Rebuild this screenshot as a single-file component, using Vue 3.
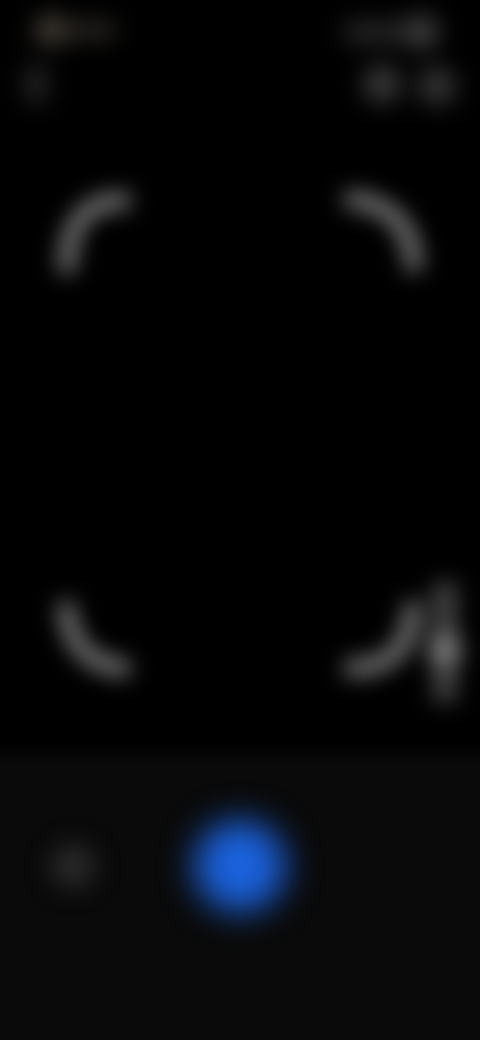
<script setup>
const corners = [
  { id: 'tl', d: 'M78 8 C34 5 14 30 15 80' },
  { id: 'tr', d: 'M15 6 C58 8 84 32 84 78' },
  { id: 'bl', d: 'M14 12 C15 52 36 78 78 78' },
  { id: 'br', d: 'M15 78 C58 80 82 60 83 12' }
]
const topRow = corners.slice(0, 2)
const bottomRow = corners.slice(2)
</script>

<template>
  <main class="screen">
    <header class="top">
      <svg class="glyph left" width="110" height="90" viewBox="0 0 110 90" fill="none">
        <path d="M20 22 H92" stroke="#312d28" stroke-width="16" />
        <circle cx="26" cy="22" r="15" fill="#4a433b" />
        <path d="M12 58 V94" stroke="#2a2a2a" stroke-width="20" />
      </svg>
      <svg class="glyph right" width="124" height="90" viewBox="0 0 124 90" fill="none">
        <path d="M12 24 H96" stroke="#2a2a2a" stroke-width="20" />
        <circle cx="90" cy="24" r="17" fill="#404040" />
        <circle cx="50" cy="76" r="19" fill="#3a3a3a" />
        <circle cx="105" cy="78" r="19" fill="#363636" />
      </svg>
    </header>

    <section class="frame">
      <div class="row">
        <svg v-for="c in topRow" :key="c.id" class="corner" viewBox="0 0 90 90" fill="none">
          <path :d="c.d" stroke="#808080" stroke-width="16" />
        </svg>
      </div>
      <div class="row">
        <svg v-for="c in bottomRow" :key="c.id" class="corner" viewBox="0 0 90 90" fill="none">
          <path :d="c.d" stroke="#808080" stroke-width="16" />
          <path v-if="c.id === 'br'" d="M115 -8 V112" stroke="#454545" stroke-width="24" />
          <circle v-if="c.id === 'br'" cx="115" cy="60" r="17" fill="#7c7c7c" />
        </svg>
      </div>
    </section>

    <footer class="bar">
      <span class="side"></span>
      <span class="shutter"></span>
    </footer>
  </main>
</template>

<style scoped>
.screen {
  width: 480px;
  height: 1040px;
  background: #000;
  display: flex;
  flex-direction: column;
  overflow: hidden;
}
.top {
  height: 130px;
  flex: none;
  display: flex;
  justify-content: space-between;
  align-items: flex-start;
  padding: 8px 24px 0 24px;
  box-sizing: border-box;
}
.glyph {
  overflow: visible;
  filter: blur(12px);
}
.frame {
  flex: 1;
  display: flex;
  flex-direction: column;
  justify-content: space-between;
  padding: 63px 60px 62px 52px;
}
.row {
  display: flex;
  justify-content: space-between;
}
.corner {
  width: 90px;
  height: 90px;
  overflow: visible;
  filter: blur(11px);
}
.bar {
  height: 298px;
  flex: none;
  background: linear-gradient(#000, #0a0a0a 22px);
  display: flex;
  align-items: center;
  padding: 0 0 51px 51px;
  box-sizing: border-box;
}
.side {
  width: 44px;
  height: 44px;
  border-radius: 50%;
  background: #2a2a2a;
  filter: blur(12px);
}
.shutter {
  width: 92px;
  height: 92px;
  margin-left: 99px;
  border-radius: 50%;
  background: #1b62dc;
  filter: blur(17px);
}
</style>
